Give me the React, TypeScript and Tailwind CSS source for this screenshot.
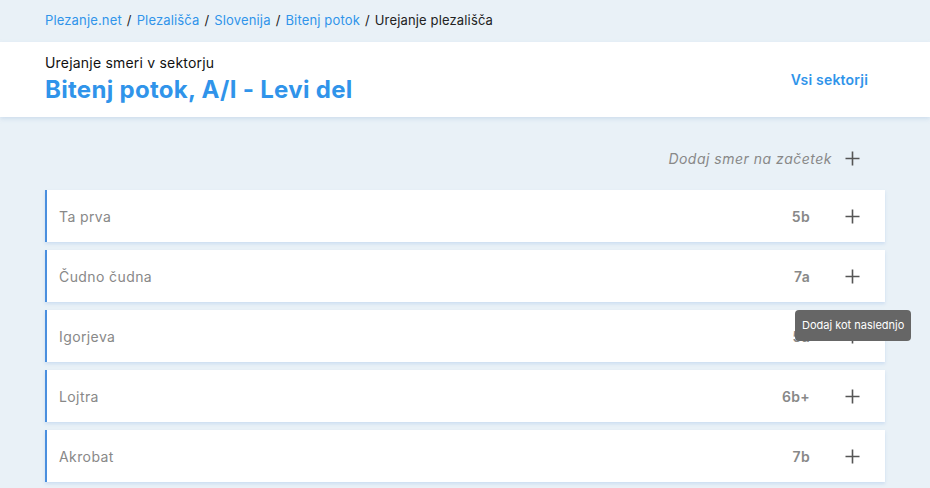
import React from "react";

const routes = [
  { name: "Ta prva", grade: "5b" },
  { name: "Čudno čudna", grade: "7a" },
  { name: "Igorjeva", grade: "5a" },
  { name: "Lojtra", grade: "6b+" },
  { name: "Akrobat", grade: "7b" },
];

function Plus() {
  return (
    <svg width="15" height="15" viewBox="0 0 15 15" className="text-[#555]">
      <path d="M7.5 0.5v14M0.5 7.5h14" stroke="currentColor" strokeWidth="1.6" fill="none" />
    </svg>
  );
}

export default function App() {
  return (
    <div
      className="min-h-[488px] bg-[#e9f1f7] overflow-hidden"
      style={{ fontFamily: "Inter, 'Noto Sans', sans-serif" }}
    >
      <div className="h-[42px] flex items-center px-[45px] text-[13px] text-[#222] gap-[5px] tracking-[0.15px]">
        <span className="text-[#3094ea]">Plezanje.net</span>
        <span>/</span>
        <span className="text-[#3094ea]">Plezališča</span>
        <span>/</span>
        <span className="text-[#3094ea]">Slovenija</span>
        <span>/</span>
        <span className="text-[#3094ea]">Bitenj potok</span>
        <span>/</span>
        <span>Urejanje plezališča</span>
      </div>
      <div className="bg-white h-[75px] flex items-center justify-between pl-[45px] pr-[62px] shadow-[0_2px_4px_rgba(160,190,220,0.35)]">
        <div className="flex flex-col">
          <div className="text-[14px] text-[#111] leading-[18px] tracking-[0.2px]">Urejanje smeri v sektorju</div>
          <div className="text-[24px] font-bold text-[#3094ea] leading-[32px] mt-[2px] tracking-[0.3px]">
            Bitenj potok, A/I - Levi del
          </div>
        </div>
        <div className="text-[14px] font-semibold text-[#3094ea] tracking-[0.2px]">Vsi sektorji</div>
      </div>
      <div className="px-[45px] pr-[45px] pt-[29px]">
        <div className="flex items-center justify-end h-[24px] pr-[25px] gap-[13px] mb-[20px]">
          <span className="italic text-[14px] text-[#888] tracking-[0.5px]">Dodaj smer na začetek</span>
          <Plus />
        </div>
        <div className="flex flex-col gap-[8px]">
          {routes.map((r, i) => (
            <div
              key={r.name}
              className="relative h-[52px] bg-white border-l-2 border-[#4a8fde] flex items-center pl-[12px] pr-[25px] shadow-[0_2px_3px_rgba(170,200,235,0.45)]"
            >
              <span className="flex-1 text-[14px] text-[#888] tracking-[0.4px]">{r.name}</span>
              <span className="text-[14px] font-semibold text-[#888] mr-[35px] tracking-[0.3px]">{r.grade}</span>
              <Plus />
              {i === 2 && (
                <div className="absolute left-[748px] top-0 h-[31px] px-[7px] flex items-center rounded-[4px] bg-[#666] text-white text-[11px] whitespace-nowrap">
                  Dodaj kot naslednjo
                </div>
              )}
            </div>
          ))}
        </div>
      </div>
    </div>
  );
}
